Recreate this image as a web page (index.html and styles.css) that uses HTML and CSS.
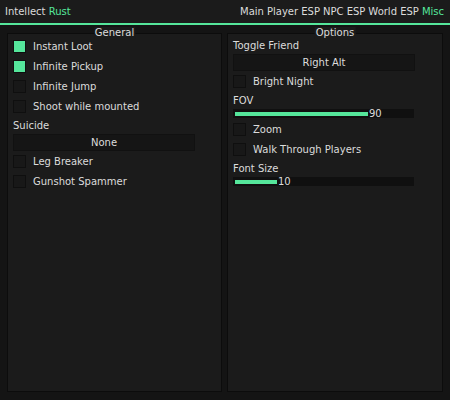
FILE: index.html
```html
<!DOCTYPE html>
<html>
<head>
    <title>Intellect Rust</title>
    <link rel="stylesheet" href="styles.css">
</head>
<body>
    <div class="header">
        <span class="brand">Intellect <span class="accent">Rust</span></span>
        <div class="tabs">
            <span>Main</span>
            <span>Player ESP</span>
            <span>NPC ESP</span>
            <span>World ESP</span>
            <span class="accent">Misc</span>
        </div>
    </div>
    <div class="accent-line"></div>

    <div class="panels">
        <div class="panel">
            <div class="panel-title">General</div>
            <div class="row"><div class="check on"></div>Instant Loot</div>
            <div class="row"><div class="check on"></div>Infinite Pickup</div>
            <div class="row"><div class="check"></div>Infinite Jump</div>
            <div class="row"><div class="check"></div>Shoot while mounted</div>
            <div class="label">Suicide</div>
            <div class="select">None</div>
            <div class="row"><div class="check"></div>Leg Breaker</div>
            <div class="row"><div class="check"></div>Gunshot Spammer</div>
        </div>

        <div class="panel">
            <div class="panel-title">Options</div>
            <div class="label first">Toggle Friend</div>
            <div class="select">Right Alt</div>
            <div class="row"><div class="check"></div>Bright Night</div>
            <div class="label">FOV</div>
            <div class="slider">
                <div class="fill" style="width: 133px"></div>
                <span class="value">90</span>
            </div>
            <div class="row"><div class="check"></div>Zoom</div>
            <div class="row"><div class="check"></div>Walk Through Players</div>
            <div class="label">Font Size</div>
            <div class="slider">
                <div class="fill" style="width: 42px"></div>
                <span class="value">10</span>
            </div>
        </div>
    </div>
</body>
</html>
```

FILE: styles.css
```css
:root {
    --green: #55e69b;
    --page-bg: #141414;
    --panel-bg: #1b1b1b;
    --dark: #101010;
    --text: #dcdcdc;
}

body {
    margin: 0;
    background-color: var(--page-bg);
    color: var(--text);
    font-family: 'DejaVu Sans', sans-serif;
    font-size: 10px;
    line-height: 12px;
    height: 400px;
    display: flex;
    flex-direction: column;
}

.accent {
    color: var(--green);
}

.header {
    height: 23px;
    background-color: var(--panel-bg);
    display: flex;
    justify-content: space-between;
    align-items: center;
    padding: 0 6px 0 5px;
}

.tabs {
    display: flex;
    gap: 3px;
}

.accent-line {
    height: 2px;
    background-color: var(--green);
}

.panels {
    flex: 1;
    display: grid;
    grid-template-columns: 215px 216px;
    gap: 5px;
    padding: 8px 8px 8px 7px;
}

.panel {
    position: relative;
    background-color: var(--panel-bg);
    border: 1px solid #0c0c0c;
    padding: 6px 5px;
}

.panel-title {
    position: absolute;
    top: -7px;
    left: 50%;
    transform: translateX(-50%);
    background-color: var(--panel-bg);
    padding: 0 1px;
}

.row {
    height: 13px;
    display: flex;
    align-items: center;
    gap: 7px;
    margin-bottom: 7px;
}

.check {
    width: 11px;
    height: 11px;
    background-color: #181818;
    border: 1px solid #0f0f0f;
}

.check.on {
    background-color: var(--green);
}

.label {
    margin: 1px 0 2px;
}

.label.first {
    margin-top: 0;
}

.select {
    width: 180px;
    height: 15px;
    line-height: 15px;
    text-align: center;
    background-color: #151515;
    border: 1px solid #111111;
    margin-bottom: 4px;
}

.slider {
    width: 179px;
    height: 9px;
    padding-left: 2px;
    background-color: var(--dark);
    display: flex;
    align-items: center;
    margin-bottom: 5px;
}

.fill {
    height: 4px;
    background-color: var(--green);
}

.value {
    line-height: 9px;
    margin-left: 1px;
}
```
